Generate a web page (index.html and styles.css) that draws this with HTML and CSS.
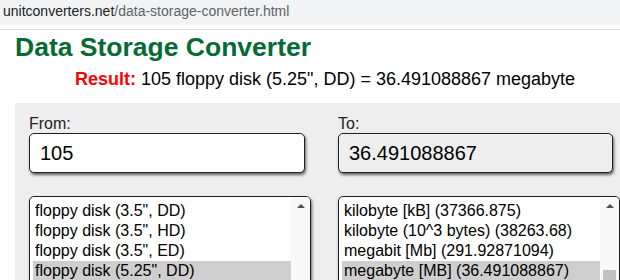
FILE: index.html
```html
<!DOCTYPE html>
<html lang="en">
  <head>
    <meta charset="UTF-8" />
    <meta name="viewport" content="width=device-width, initial-scale=1.0" />
    <title>Data Storage Converter</title>
    <link rel="stylesheet" href="styles.css">
  </head>
  <body>
    <div class="urlbar"><span class="host">unitconverters.net</span>/data-storage-converter.html</div>

    <div class="page">
      <h1>Data Storage Converter</h1>
      <p class="result"><b>Result:</b> 105 floppy disk (5.25", DD) = 36.491088867 megabyte</p>

      <div class="panel">
        <div class="col">
          <label for="from">From:</label>
          <input class="field" type="text" id="from" value="105" />
          <div class="list">
            <ul class="options">
              <li>floppy disk (3.5", DD)</li>
              <li>floppy disk (3.5", HD)</li>
              <li>floppy disk (3.5", ED)</li>
              <li class="selected">floppy disk (5.25", DD)</li>
            </ul>
            <div class="scroll">
              <span class="arrow"></span>
            </div>
          </div>
        </div>

        <div class="col">
          <label for="to">To:</label>
          <input class="field readonly" type="text" id="to" value="36.491088867" readonly />
          <div class="list">
            <ul class="options">
              <li>kilobyte [kB] (37366.875)</li>
              <li>kilobyte (10^3 bytes) (38263.68)</li>
              <li>megabit [Mb] (291.92871094)</li>
              <li class="selected">megabyte [MB] (36.491088867)</li>
            </ul>
            <div class="scroll">
              <span class="arrow"></span>
              <span class="thumb"></span>
            </div>
          </div>
        </div>
      </div>
    </div>
  </body>
</html>
```

FILE: styles.css
```css
body {
  margin: 0;
  font-family: "Liberation Sans", Arial, sans-serif;
  background-color: #fff;
  color: #000;
  overflow: hidden;
}

.urlbar {
  height: 25px;
  line-height: 22px;
  padding-left: 3px;
  font-size: 14px;
  background-color: #f1f3f4;
  color: #5f6368;
  margin-bottom: 4px;
}

.urlbar .host {
  color: #202124;
}

.page {
  border-top: 1px solid #d6d6d6;
  padding-left: 15px;
  width: 620px;
}

h1 {
  margin: 2px 0 0 0;
  font-size: 26.5px;
  line-height: 30px;
  font-weight: bold;
  color: #066a35;
}

.result {
  margin: 6px 0 0 0;
  font-size: 18px;
  line-height: 22px;
  text-align: center;
}

.result b {
  color: #f00;
}

.panel {
  margin-top: 13px;
  background-color: #eee;
  padding: 12px 0 0 14px;
  height: 200px;
  display: grid;
  grid-template-columns: 290px 290px;
  column-gap: 19px;
  align-items: start;
}

.col {
  display: flex;
  flex-direction: column;
}

.col label {
  font-size: 16px;
  line-height: 18px;
  color: #222;
}

.field {
  box-sizing: border-box;
  width: 276px;
  height: 40px;
  margin: 0;
  padding: 0 10px;
  border: 1px solid #222;
  border-radius: 5px;
  background-color: #fff;
  box-shadow: 1px 2px 3px rgba(0, 0, 0, 0.6);
  font-family: "Liberation Sans", Arial, sans-serif;
  font-size: 20px;
  color: #000;
  outline: none;
}

.field.readonly {
  width: 275px;
  background-color: #eee;
}

.list {
  box-sizing: border-box;
  width: 282px;
  height: 110px;
  margin-top: 23px;
  border: 1px solid #222;
  border-radius: 5px;
  background-color: #fff;
  box-shadow: 1px 2px 3px rgba(0, 0, 0, 0.6);
  display: flex;
  overflow: hidden;
}

.options {
  list-style: none;
  margin: 0;
  padding: 4px 0 0 3px;
  flex: 1;
}

.options li {
  font-size: 16px;
  line-height: 20px;
  height: 20px;
  padding-left: 2px;
  white-space: nowrap;
}

.options li.selected {
  background-color: #cecece;
}

.scroll {
  width: 19px;
  background-color: #f8f8f8;
  display: flex;
  flex-direction: column;
  align-items: center;
}

.arrow {
  margin-top: 7px;
  width: 0;
  height: 0;
  border-left: 4px solid transparent;
  border-right: 4px solid transparent;
  border-bottom: 4px solid #505050;
}

.thumb {
  margin-top: 62px;
  width: 13px;
  height: 40px;
  background-color: #c1c1c1;
}
```
